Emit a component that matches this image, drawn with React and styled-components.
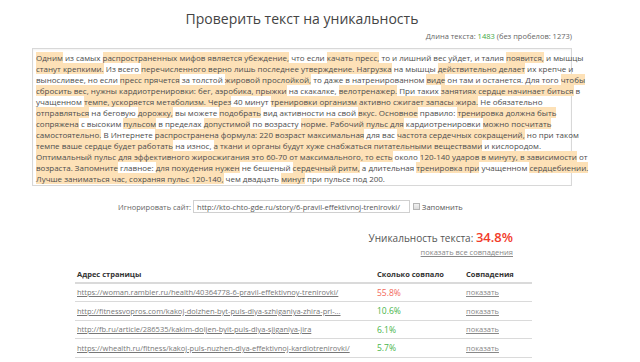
import React from 'react';
import styled, { createGlobalStyle } from 'styled-components';

const GlobalStyle = createGlobalStyle`
  html, body {
    margin: 0;
    padding: 0;
    background: #fff;
  }
  body {
    font-family: "Open Sans", "Liberation Sans", sans-serif;
    color: #555;
  }
`;

// highlighted fragments are wrapped in [brackets]
const lines = [
  '[Одним] из самых [распространенных мифов является убеждение,] что если [качать пресс,] то и лишний вес уйдет, и талия [появится,] и мышцы',
  '[станут крепкими.] Из всего [перечисленного верно лишь последнее утверждение. Нагрузка] на мышцы [действительно делает] их крепче и',
  'выносливее, но если [пресс прячется] за толстой [жировой прослойкой,] то даже в натренированном [виде] он там и останется. Для того [чтобы]',
  '[сбросить вес, нужны кардиотренировки: бег, аэробика, прыжки] на скакалке, [велотренажер.] При таких [занятиях сердце начинает биться] в',
  'учащенном [темпе, ускоряется метаболизм. Через] 40 минут [тренировки организм активно сжигает запасы жира.] Не обязательно',
  '[отправляться] на беговую [дорожку,] вы можете [подобрать] вид активности на свой [вкус. Основное] правило: [тренировка должна быть]',
  '[сопряжена] с высоким [пульсом] в пределах [допустимой] по возрасту [норме. Рабочий пульс для] кардиотренировки [можно посчитать]',
  '[самостоятельно.] В Интернете [распространена формула: 220 возраст максимальная] для вас [частота сердечных сокращений,] но при таком',
  '[темпе ваше сердце будет работать] на износ, [а ткани и органы будут хуже снабжаться питательными веществами] и кислородом.',
  '[Оптимальный пульс для эффективного жиросжигания это 60-70 от максимального, то есть] около [120-140 ударов в минуту, в зависимости] от',
  '[возраста. Запомните] главное: [для похудения нужен] не бешеный [сердечный ритм,] а длительная [тренировка при] учащенном [сердцебиении.]',
  '[Лучше заниматься час, сохраняя пульс 120-140,] чем двадцать [минут] при пульсе под 200.',
];

const matches = [
  { url: 'https://woman.rambler.ru/health/40364778-6-pravil-effektivnoy-trenirovki/', pct: '55.8%', high: true },
  { url: 'http://fitnessvopros.com/kakoj-dolzhen-byt-puls-dlya-szhiganiya-zhira-pri-...', pct: '10.6%' },
  { url: 'http://fb.ru/article/286535/kakim-doljen-byit-puls-dlya-sjiganiya-jira', pct: '6.1%' },
  { url: 'https://whealth.ru/fitness/kakoj-puls-nuzhen-dlya-effektivnoj-kardiotrenirovki/', pct: '5.7%' },
];

const parseLine = (line) =>
  line.split(/(\[[^\]]*\])/).filter(Boolean).map((part) =>
    part.startsWith('[') ? { text: part.slice(1, -1), mark: true } : { text: part, mark: false }
  );

const Page = styled.div`
  width: 540px;
  margin-left: 32px;
  padding-top: 9px;
`;

const Title = styled.h1`
  margin: 0;
  font-size: 14px;
  font-weight: 400;
  line-height: 20px;
  text-align: center;
  color: #444;
`;

const Length = styled.div`
  margin-top: 2px;
  font-size: 7.5px;
  line-height: 10px;
  text-align: right;
  color: #666;

  b {
    font-weight: 400;
    color: #3fa83f;
  }
`;

const TextBox = styled.div`
  margin-top: 7px;
  border: 1px solid #d8d8d8;
  box-shadow: inset 0 1px 2px rgba(0, 0, 0, 0.05);
  padding: 3px 3px 1px;
  font-size: 8px;
  line-height: 11px;
  color: #4d4d4d;
`;

const Line = styled.div`
  white-space: nowrap;
`;

const Mark = styled.span`
  background: ${(p) => (p.$on ? '#fde1b7' : 'transparent')};
`;

const IgnoreRow = styled.div`
  margin-top: 14px;
  padding-left: 86px;
  display: flex;
  align-items: center;
  height: 13px;
  font-size: 7.5px;
  color: #666;
`;

const UrlInput = styled.div`
  margin-left: 2px;
  width: 217px;
  height: 13px;
  box-sizing: border-box;
  border: 1px solid #d0d0d0;
  padding: 0 3px;
  display: flex;
  align-items: center;
  color: #555;
  white-space: nowrap;
  overflow: hidden;
`;

const Check = styled.span`
  margin-left: 3px;
  width: 7px;
  height: 7px;
  box-sizing: border-box;
  border: 1px solid #b5b5b5;
  background: linear-gradient(#f2f2f2, #dcdcdc);
`;

const CheckLabel = styled.span`
  margin-left: 2px;
  color: #555;
`;

const Unique = styled.div`
  margin-top: 16px;
  padding-right: 59px;
  text-align: right;
  font-size: 10px;
  line-height: 16px;
  color: #555;
`;

const Score = styled.span`
  font-size: 13px;
  font-weight: 600;
  color: #f23b2a;
`;

const AllLink = styled.div`
  margin-top: 1px;
  padding-right: 59px;
  text-align: right;
  font-size: 7.5px;
  line-height: 10px;

  a {
    color: #888;
    text-decoration: underline;
  }
`;

const Table = styled.div`
  margin: 9px 0 0 43px;
  width: 457px;
`;

const Row = styled.div`
  display: grid;
  grid-template-columns: 300px 89px 1fr;
  align-items: center;
  min-height: ${(p) => (p.$head ? '15.5px' : '17.5px')};
  border-bottom: ${(p) => (p.$head ? '2px' : '1px')} solid #dadada;
  font-size: 7.5px;
`;

const Cell = styled.div`
  padding-left: 2px;
  white-space: nowrap;
  overflow: hidden;
`;

const HeadCell = styled(Cell)`
  font-weight: 700;
  color: #333;
`;

const UrlLink = styled.a`
  color: #777;
  text-decoration: underline;
`;

const Pct = styled(Cell)`
  font-size: 8.5px;
  color: ${(p) => (p.$high ? '#f2685a' : '#48b54a')};
`;

const ShowLink = styled.a`
  color: #888;
  text-decoration: underline;
`;

export default function App() {
  return (
    <>
      <GlobalStyle />
      <Page>
        <Title>Проверить текст на уникальность</Title>
        <Length>
          Длина текста: <b>1483</b> (без пробелов: 1273)
        </Length>
        <TextBox>
          {lines.map((line, i) => (
            <Line key={i}>
              {parseLine(line).map((seg, j) => (
                <Mark key={j} $on={seg.mark}>
                  {seg.text}
                </Mark>
              ))}
            </Line>
          ))}
        </TextBox>
        <IgnoreRow>
          <span>Игнорировать сайт:</span>
          <UrlInput>http://kto-chto-gde.ru/story/6-pravil-effektivnoj-trenirovki/</UrlInput>
          <Check />
          <CheckLabel>Запомнить</CheckLabel>
        </IgnoreRow>
        <Unique>
          Уникальность текста: <Score>34.8%</Score>
        </Unique>
        <AllLink>
          <a>показать все совпадения</a>
        </AllLink>
        <Table>
          <Row $head>
            <HeadCell>Адрес страницы</HeadCell>
            <HeadCell>Сколько совпало</HeadCell>
            <HeadCell>Совпадения</HeadCell>
          </Row>
          {matches.map((m) => (
            <Row key={m.url}>
              <Cell>
                <UrlLink>{m.url}</UrlLink>
              </Cell>
              <Pct $high={m.high}>{m.pct}</Pct>
              <Cell>
                <ShowLink>показать</ShowLink>
              </Cell>
            </Row>
          ))}
        </Table>
      </Page>
    </>
  );
}
